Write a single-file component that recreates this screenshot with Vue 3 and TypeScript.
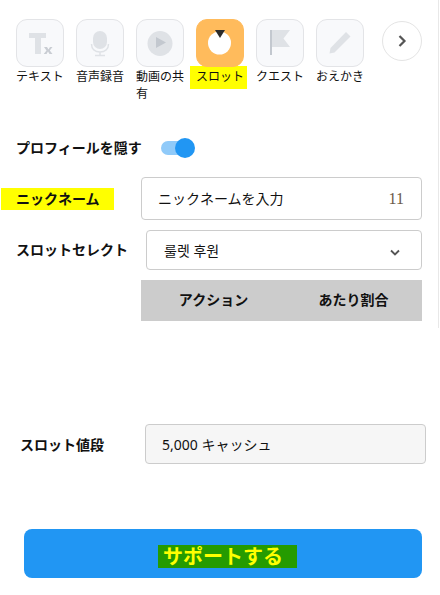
<template>
  <div class="page">
    <div class="tabs">
      <div v-for="tab in tabs" :key="tab.label" class="tab">
        <div class="tab-icon" :class="{ active: tab.active }">
          <svg width="48" height="48" viewBox="0 0 48 48" v-html="tab.icon"></svg>
        </div>
        <span class="tab-label" :class="{ marked: tab.active }">{{ tab.label }}</span>
      </div>
      <button class="next-btn">
        <svg width="12" height="14" viewBox="0 0 12 14"><path d="M3.500 2 L8.500 7 L3.500 12" fill="none" stroke="#555" stroke-width="2.200" /></svg>
      </button>
    </div>

    <div class="toggle-row">
      <span class="label">プロフィールを隠す</span>
      <div class="toggle"><div class="knob"></div></div>
    </div>

    <div class="nick-row">
      <span class="label nick-label">ニックネーム</span>
      <div class="field nick-field">
        <span class="nick-hint">ニックネームを入力</span>
        <span class="count">11</span>
      </div>
    </div>

    <div class="select-row">
      <span class="label">スロットセレクト</span>
      <div class="field select-field">
        <span>룰렛 후원</span>
        <svg class="chevron" width="10" height="7" viewBox="0 0 10 7"><path d="M1 1.500 L5 5.500 L9 1.500" fill="none" stroke="#555" stroke-width="1.800" /></svg>
      </div>
    </div>

    <div class="table-head">
      <span>アクション</span>
      <span>あたり割合</span>
    </div>

    <div class="price-row">
      <span class="label">スロット値段</span>
      <div class="field price-field">5,000 キャッシュ</div>
    </div>

    <button class="submit"><span class="submit-text">サポートする</span></button>
  </div>
</template>

<script setup lang="ts">
interface Tab {
  label: string
  icon: string
  active?: boolean
}

const grey = '#dfe2e6'

const tabs: Tab[] = [
  {
    label: 'テキスト',
    icon: `<path d="M13 14h17v5h-5v16h-6V19h-6z" fill="${grey}"/><path d="M28 28h3l1.500 2.500L34 28h2.500l-2.700 3.400 2.700 3.600h-3l-1.500-2.500-1.500 2.500h-2.800l2.800-3.600z" fill="#c9cdd3"/>`,
  },
  {
    label: '音声録音',
    icon: `<rect x="17" y="12" width="14" height="18" rx="7" fill="${grey}"/><path d="M15.500 25c0 5 3.500 8 8.500 8s8.500-3 8.500-8M24 33v3M19 36.500h10" fill="none" stroke="${grey}" stroke-width="1.500"/>`,
  },
  {
    label: '動画の共有',
    icon: `<circle cx="24" cy="24.500" r="12.500" fill="${grey}"/><path d="M20 18l10 5.500-10 5.500z" fill="#c3c8cf"/>`,
  },
  {
    label: 'スロット',
    active: true,
    icon: `<circle cx="23.500" cy="24" r="11.500" fill="#fff"/><path d="M19 11h10l-5 8z" fill="#2b2b2b"/>`,
  },
  {
    label: 'クエスト',
    icon: `<rect x="14" y="11" width="2" height="25" fill="#c3c8cf"/><path d="M16 11h18l-6.500 8.500L34 28H16z" fill="${grey}"/>`,
  },
  {
    label: 'おえかき',
    icon: `<path d="M30 13l4.500 4.500-16 16-5 1 1-5.500z" fill="${grey}"/>`,
  },
]
</script>

<style scoped>
.page {
  position: relative;
  width: 440px;
  height: 595px;
  overflow: hidden;
  box-sizing: border-box;
  padding-top: 19px;
  font-family: "Noto Sans", "Noto Sans CJK JP", sans-serif;
  font-size: 14px;
  color: #111;
  background: #fff;
}

/* edge of the scroll area behind the form */
.page::after {
  content: "";
  position: absolute;
  top: 0;
  left: 438px;
  width: 1px;
  height: 328px;
  background: #e8e8e8;
}

.tabs {
  display: flex;
  height: 83px;
  padding-left: 16px;
}

.tab {
  position: relative;
  width: 48px;
  margin-right: 12px;
}

.tab-icon {
  position: relative;
  z-index: 1;
  width: 48px;
  height: 48px;
  box-sizing: border-box;
  background: #f8f9fb;
  border: 1px solid #e3e4e7;
  border-radius: 11px;
  display: flex;
  align-items: center;
  justify-content: center;
}

.tab-icon svg {
  flex: none;
}

.tab-icon.active {
  background: #ffbb5c;
  border-color: #ffbb5c;
}

.tab-label {
  display: block;
  font-size: 12px;
  line-height: 17px;
  margin-top: 1px;
}

.tab-label.marked {
  box-sizing: content-box;
  width: 48px;
  background: #ffff00;
  margin: -1px -3px 0 -6px;
  padding: 2px 3px 4px 6px;
}

.next-btn {
  width: 40px;
  height: 40px;
  padding: 0;
  margin: 2px 0 0 6px;
  border: 1px solid #e4e4e4;
  border-radius: 50%;
  background: #fff;
  display: flex;
  align-items: center;
  justify-content: center;
}

.label {
  font-size: 14px;
  font-weight: 700;
  color: #111;
}

.toggle-row {
  display: flex;
  align-items: center;
  height: 24px;
  margin-top: 34px;
  padding-left: 16px;
}

.toggle-row .label,
.select-row .label,
.nick-hint {
  padding-bottom: 2px;
}

.toggle {
  position: relative;
  width: 32px;
  height: 14px;
  margin-left: 19px;
  background: #90caf9;
  border-radius: 7px;
}

.knob {
  position: absolute;
  top: -3px;
  right: -2px;
  width: 20px;
  height: 20px;
  border-radius: 50%;
  background: #2196f3;
}

.field {
  box-sizing: border-box;
  height: 40px;
  background: #fff;
  border: 1px solid #ccc;
  border-radius: 4px;
  display: flex;
  align-items: center;
  font-size: 14px;
}

.nick-row {
  display: flex;
  align-items: center;
  margin-top: 17px;
  height: 43px;
}

.nick-label {
  width: 113px;
  height: 22px;
  line-height: 22px;
  padding-left: 15px;
  margin-left: 1px;
  box-sizing: border-box;
  background: #ffff00;
}

.nick-field {
  width: 281px;
  height: 43px;
  margin-left: 27px;
  padding: 0 17px 0 16px;
  justify-content: space-between;
}

.count {
  font-family: "Liberation Serif", serif;
  font-size: 16px;
  color: #6b5a48;
}

.select-row {
  display: flex;
  align-items: center;
  margin-top: 10px;
  padding-left: 16px;
}

.select-row .label {
  width: 130px;
}

.select-field {
  width: 276px;
  padding: 0 21px 0 17px;
  justify-content: space-between;
}

.chevron {
  margin-top: 4px;
}

.table-head {
  display: flex;
  width: 281px;
  height: 41px;
  box-sizing: border-box;
  padding: 0 0 3px 4px;
  margin: 10px 0 0 141px;
  background: #cccccc;
  font-size: 14px;
  font-weight: 700;
  align-items: center;
}

.table-head span {
  flex: 1;
  text-align: center;
}

.table-head span + span {
  padding-left: 3px;
}

.price-row {
  display: flex;
  align-items: center;
  margin-top: 103px;
  padding-left: 20px;
}

.price-row .label {
  width: 125px;
}

.price-field {
  width: 281px;
  background: #f6f6f6;
  padding: 0 16px;
}

.submit {
  display: block;
  width: 398px;
  height: 49px;
  margin: 65px 0 0 24px;
  padding: 3px 0 0;
  border: none;
  border-radius: 8px;
  background: #2196f3;
  font-family: "Noto Sans CJK JP", sans-serif;
  font-size: 20px;
  font-weight: 700;
  color: #ffff00;
}

.submit-text {
  display: inline-block;
  margin: 0 -14px 0 -5px;
  padding: 0 14px 2px 5px;
  line-height: 21px;
  background: #259b00;
}
</style>
